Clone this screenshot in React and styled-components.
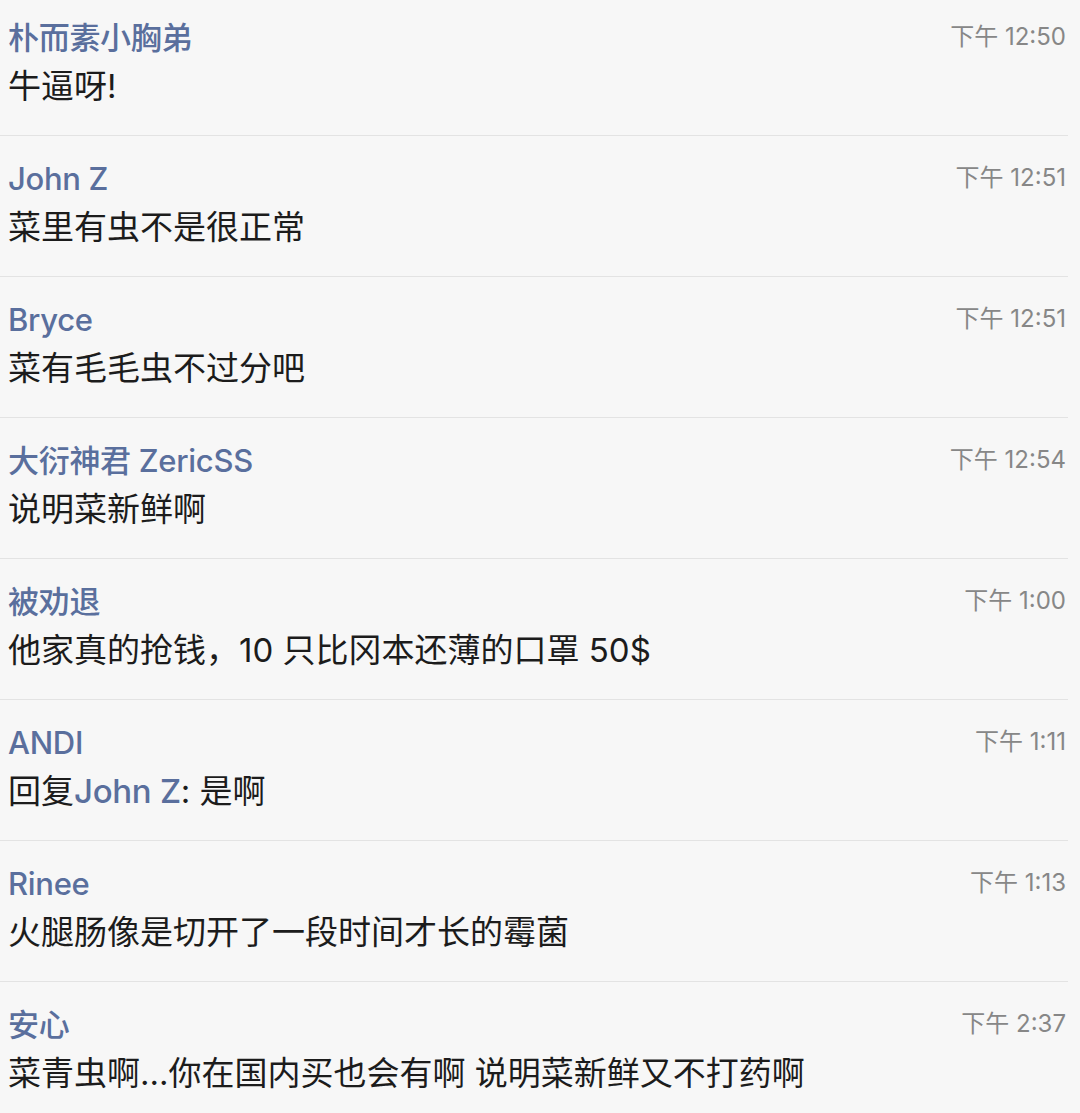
import React from "react";
import styled, { createGlobalStyle } from "styled-components";

const Global = createGlobalStyle`
  html, body {
    margin: 0;
    padding: 0;
    background: #f7f7f7;
  }
  body {
    font-family: Inter, "Noto Sans CJK SC", sans-serif;
    -webkit-font-smoothing: antialiased;
  }
`;

const List = styled.div`
  margin-top: -5px;
  padding-right: 12px;
  background: #f7f7f7;
  overflow: hidden;
`;

const Row = styled.div`
  display: flex;
  justify-content: space-between;
  align-items: flex-start;
  height: 141px;
  box-sizing: border-box;
  padding: 23px 2px 0 8px;
  border-bottom: 1px solid #e3e3e3;
`;

const Body = styled.div`
  display: flex;
  flex-direction: column;
  gap: 8px;
`;

const Name = styled.div`
  font-size: 31px;
  line-height: 40px;
  font-weight: 500;
  color: #5a6f9d;
  white-space: nowrap;
  letter-spacing: -0.3px;
`;

const Message = styled.div`
  font-size: 33px;
  line-height: 40px;
  color: #1c1c1c;
  white-space: nowrap;
`;

const Mention = styled.span`
  color: #5a6f9d;
  font-weight: 500;
  letter-spacing: -0.3px;
`;

const Time = styled.div`
  margin-top: 3px;
  font-size: 24px;
  line-height: 32px;
  color: #878787;
  white-space: nowrap;
`;

const messages = [
  { name: "朴而素小胸弟", time: "下午 12:50", text: "牛逼呀!" },
  { name: "John Z", time: "下午 12:51", text: "菜里有虫不是很正常" },
  { name: "Bryce", time: "下午 12:51", text: "菜有毛毛虫不过分吧" },
  { name: "大衍神君 ZericSS", time: "下午 12:54", text: "说明菜新鲜啊" },
  { name: "被劝退", time: "下午 1:00", text: "他家真的抢钱，10 只比冈本还薄的口罩 50$" },
  { name: "ANDI", time: "下午 1:11", reply: "John Z", text: ": 是啊" },
  { name: "Rinee", time: "下午 1:13", text: "火腿肠像是切开了一段时间才长的霉菌" },
  { name: "安心", time: "下午 2:37", text: "菜青虫啊...你在国内买也会有啊 说明菜新鲜又不打药啊" },
];

export default function App() {
  return (
    <>
      <Global />
      <List>
        {messages.map((m, i) => (
          <Row key={i}>
            <Body>
              <Name>{m.name}</Name>
              <Message>
                {m.reply ? (
                  <>
                    回复<Mention>{m.reply}</Mention>
                  </>
                ) : null}
                {m.text}
              </Message>
            </Body>
            <Time>{m.time}</Time>
          </Row>
        ))}
      </List>
    </>
  );
}
